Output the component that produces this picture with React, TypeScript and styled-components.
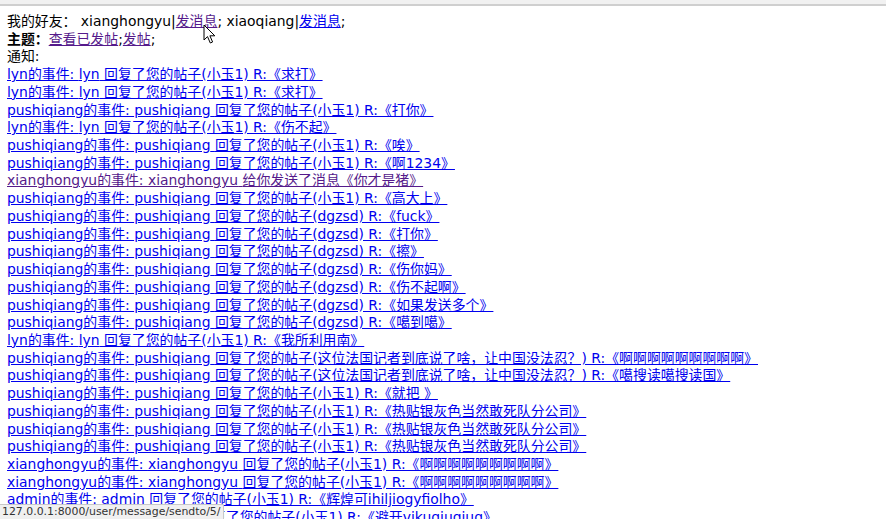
import React from 'react'
import styled, { createGlobalStyle } from 'styled-components'

const GlobalStyle = createGlobalStyle`
  html, body {
    margin: 0;
    padding: 0;
    background: #ffffff;
    overflow: hidden;
  }
  body {
    font-family: "DejaVu Sans", "Noto Sans CJK SC", sans-serif;
    font-size: 13.9px;
    color: #000000;
  }
`

interface Notice {
  who: string
  text: string
  visited?: boolean
}

const notices: Notice[] = [
  { who: 'lyn', text: '回复了您的帖子(小玉1) R:《求打》' },
  { who: 'lyn', text: '回复了您的帖子(小玉1) R:《求打》' },
  { who: 'pushiqiang', text: '回复了您的帖子(小玉1) R:《打你》' },
  { who: 'lyn', text: '回复了您的帖子(小玉1) R:《伤不起》' },
  { who: 'pushiqiang', text: '回复了您的帖子(小玉1) R:《唉》' },
  { who: 'pushiqiang', text: '回复了您的帖子(小玉1) R:《啊1234》' },
  { who: 'xianghongyu', text: '给你发送了消息《你才是猪》', visited: true },
  { who: 'pushiqiang', text: '回复了您的帖子(小玉1) R:《高大上》' },
  { who: 'pushiqiang', text: '回复了您的帖子(dgzsd) R:《fuck》' },
  { who: 'pushiqiang', text: '回复了您的帖子(dgzsd) R:《打你》' },
  { who: 'pushiqiang', text: '回复了您的帖子(dgzsd) R:《擦》' },
  { who: 'pushiqiang', text: '回复了您的帖子(dgzsd) R:《伤你妈》' },
  { who: 'pushiqiang', text: '回复了您的帖子(dgzsd) R:《伤不起啊》' },
  { who: 'pushiqiang', text: '回复了您的帖子(dgzsd) R:《如果发送多个》' },
  { who: 'pushiqiang', text: '回复了您的帖子(dgzsd) R:《噶到噶》' },
  { who: 'lyn', text: '回复了您的帖子(小玉1) R:《我所利用南》' },
  { who: 'pushiqiang', text: '回复了您的帖子(这位法国记者到底说了啥，让中国没法忍？) R:《啊啊啊啊啊啊啊啊啊》' },
  { who: 'pushiqiang', text: '回复了您的帖子(这位法国记者到底说了啥，让中国没法忍？) R:《噶搜读噶搜读国》' },
  { who: 'pushiqiang', text: '回复了您的帖子(小玉1) R:《就把 》' },
  { who: 'pushiqiang', text: '回复了您的帖子(小玉1) R:《热贴银灰色当然敢死队分公司》' },
  { who: 'pushiqiang', text: '回复了您的帖子(小玉1) R:《热贴银灰色当然敢死队分公司》' },
  { who: 'pushiqiang', text: '回复了您的帖子(小玉1) R:《热贴银灰色当然敢死队分公司》' },
  { who: 'xianghongyu', text: '回复了您的帖子(小玉1) R:《啊啊啊啊啊啊啊啊啊》' },
  { who: 'xianghongyu', text: '回复了您的帖子(小玉1) R:《啊啊啊啊啊啊啊啊啊》' },
  { who: 'admin', text: '回复了您的帖子(小玉1) R:《辉煌可ihiljiogyfiolho》' },
  { who: 'xiaoqiang', text: '回复了您的帖子(小玉1) R:《避开vikugiugiug》' },
]

const App = () => {
  return (
    <>
      <GlobalStyle />
      <Page>
        <ChromeEdge />
        <Content>
          <Row>
            我的好友： xianghongyu|<Link href="#" $visited>发消息</Link>; xiaoqiang|<Link href="#">发消息</Link>;
          </Row>
          <Row>
            <Label>主题：</Label>
            <Link href="#" $visited>查看已发帖</Link>;<Link href="#" $visited>发帖</Link>;
          </Row>
          <Row>通知:</Row>
          <NoticeList>
            {notices.map((n, i) => (
              <Link key={i} href="#" $visited={n.visited}>
                {n.who}的事件: {n.who} {n.text}
              </Link>
            ))}
          </NoticeList>
        </Content>
        <Cursor width="14" height="21" viewBox="0 0 14 21">
          <path d="M1 1 L1 16 L4.5 12.6 L7.3 19 L9.6 18 L6.9 11.8 L11.8 11.8 Z" fill="#ffffff" stroke="#000000" strokeWidth="1" strokeLinejoin="round" />
        </Cursor>
        <StatusBar>127.0.0.1:8000/user/message/sendto/5/</StatusBar>
      </Page>
    </>
  )
}

const Page = styled.div`
  position: relative;
  width: 886px;
  height: 519px;
  overflow: hidden;
`

const ChromeEdge = styled.div`
  height: 4px;
  background: #f1f1f1;
  border-bottom: 2px solid #cfcfcf;
`

const Content = styled.div`
  padding: 7px 7px 0;
  line-height: 17.72px;
`

const Row = styled.div`
  white-space: nowrap;
`

const Label = styled.b`
  font-weight: bold;
`

const NoticeList = styled.div`
  display: flex;
  flex-direction: column;
  align-items: flex-start;
`

const Link = styled.a<{ $visited?: boolean }>`
  color: ${(p) => (p.$visited ? '#551a8b' : '#0000ee')};
  text-decoration: underline;
  white-space: nowrap;
`

const Cursor = styled.svg`
  position: absolute;
  left: 203px;
  top: 24px;
`

const StatusBar = styled.div`
  position: absolute;
  left: 0;
  bottom: 0;
  height: 14px;
  padding: 0 3px 0 2px;
  background: #f0f0f0;
  border-top: 1px solid #c8c8c8;
  border-right: 1px solid #c8c8c8;
  border-top-right-radius: 2px;
  font-family: "DejaVu Sans", sans-serif;
  font-size: 10.9px;
  line-height: 14px;
  color: #333333;
`

export default App
